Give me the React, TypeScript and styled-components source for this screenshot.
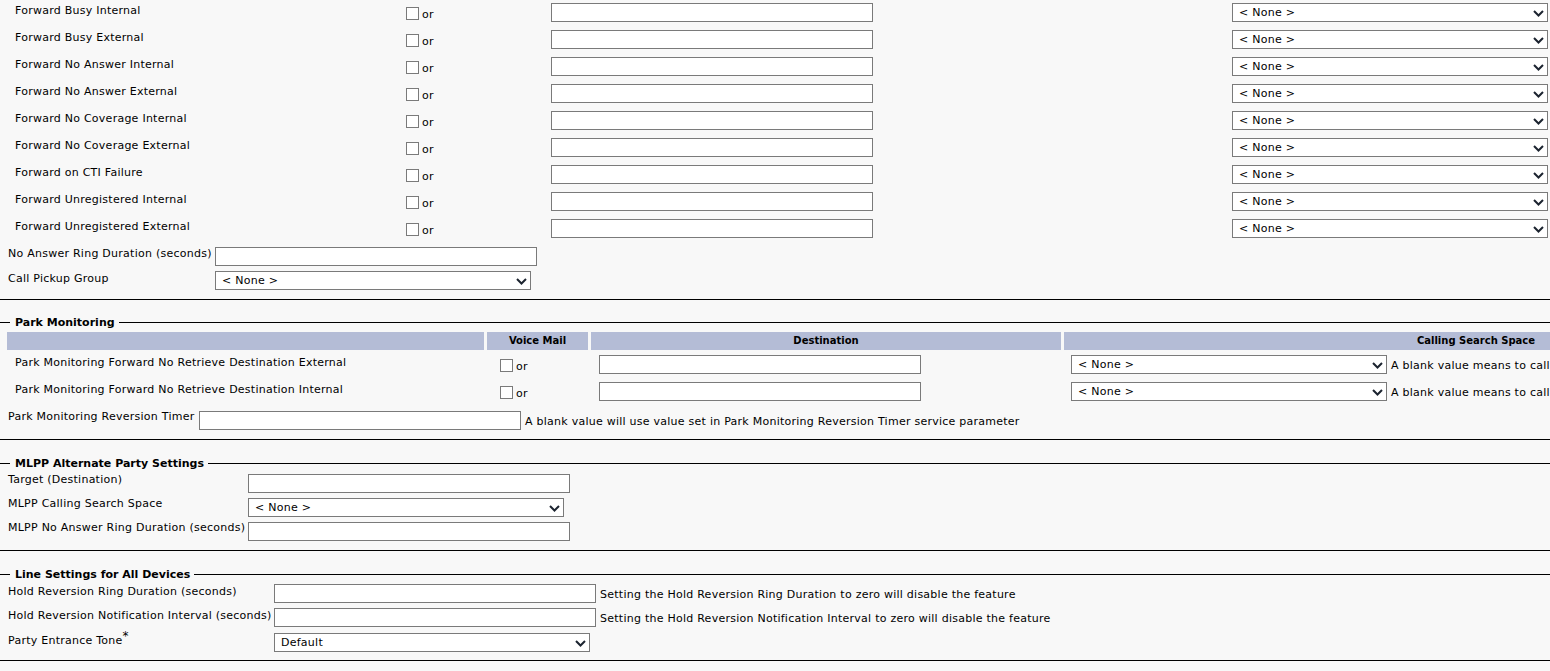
import styled, { createGlobalStyle } from "styled-components";

const FONT = `"DejaVu Sans", Verdana, "Liberation Sans", sans-serif`;

const GlobalStyle = createGlobalStyle`
    html, body {
        margin: 0;
        padding: 0;
        background: #f8f8f8;
        overflow: hidden;
    }
    body {
        font-family: ${FONT};
        font-size: 11px;
        line-height: 13px;
        letter-spacing: 0.25px;
        color: #000;
    }
`

const Page = styled.div`
    width: 1550px;
    overflow: hidden;
`

const Section = styled.section<{ $pt?: number; $pb: number }>`
    border-bottom: 1px solid #000;
    padding-top: ${(p) => p.$pt ?? 0}px;
    padding-bottom: ${(p) => p.$pb}px;
`

const SectionTitle = styled.div`
    display: flex;
    align-items: center;
    height: 13px;
    font-weight: bold;
    letter-spacing: 0;

    &::before {
        content: "";
        width: 10px;
        border-top: 1px solid #000;
    }
    &::after {
        content: "";
        flex: 1;
        border-top: 1px solid #000;
    }
    span {
        padding: 0 4px 0 5px;
        white-space: nowrap;
    }
`

const ForwardGrid = styled.div`
    display: grid;
    grid-template-columns: 391px 145px 681px 318px;
    grid-auto-rows: 27px;
    align-items: start;
    padding-left: 15px;
`

const FieldGrid = styled.div<{ $label: number; $row: number }>`
    display: grid;
    grid-template-columns: ${(p) => p.$label}px auto;
    grid-auto-rows: ${(p) => p.$row}px;
    align-items: start;
    padding-left: 8px;
`

const Label = styled.div<{ $pt: number; $pl?: number }>`
    padding-top: ${(p) => p.$pt}px;
    padding-left: ${(p) => p.$pl ?? 0}px;
    white-space: nowrap;

    sup {
        font-size: 12px;
        line-height: 0;
        vertical-align: 4px;
    }
`

const Control = styled.div<{ $mt: number; $pl?: number }>`
    display: flex;
    align-items: center;
    gap: 4px;
    margin-top: ${(p) => p.$mt}px;
    padding-left: ${(p) => p.$pl ?? 0}px;
    white-space: nowrap;
`

const CheckCell = styled.label<{ $pl?: number }>`
    display: flex;
    align-items: flex-end;
    padding-top: 7px;
    padding-left: ${(p) => p.$pl ?? 0}px;
`

const CheckBox = styled.input.attrs({ type: "checkbox" })`
    appearance: none;
    width: 13px;
    height: 13px;
    margin: 0;
    box-sizing: border-box;
    border: 1px solid #7a7a7a;
    background: #fff;
`

const OrText = styled.span`
    margin-left: 3px;
    margin-bottom: -1px;
`

const TextInput = styled.input.attrs({ type: "text" })<{ $w: number }>`
    width: ${(p) => p.$w}px;
    height: 19px;
    box-sizing: border-box;
    margin: 0;
    padding: 0 3px;
    border: 1px solid #7a7a7a;
    background: #fff;
    font: inherit;
    flex: none;
`

const SelectBox = styled.div<{ $w: number }>`
    width: ${(p) => p.$w}px;
    height: 19px;
    box-sizing: border-box;
    display: flex;
    align-items: center;
    justify-content: space-between;
    padding: 0 3px 0 6px;
    border: 1px solid #7a7a7a;
    background: #fff;
    flex: none;

    svg {
        display: block;
        margin-top: 1px;
    }
`

const Help = styled.span`
    padding-top: 2px;
`

const ParkGrid = styled.div`
    display: grid;
    grid-template-columns: 477px 101px 470px 824px;
    column-gap: 3px;
    padding-left: 7px;
    width: max-content;
`

const ParkHeader = styled(ParkGrid)`
    margin-top: 3px;
    height: 18px;
`

const HeaderCell = styled.div`
    background: #b4bcd6;
    font-size: 10px;
    font-weight: bold;
    letter-spacing: 0;
    text-align: center;
    line-height: 18px;
`

const ParkRows = styled(ParkGrid)`
    grid-auto-rows: 27px;
    align-items: start;
    margin-top: 2px;
`

const Chevron = () => (
    <svg width="11" height="7" viewBox="0 0 11 7">
        <polyline points="1,1 5.5,5.5 10,1" fill="none" stroke="#1c2430" strokeWidth="2" />
    </svg>
)

const Select = ({ w, value = "< None >" }: { w: number; value?: string }) => (
    <SelectBox $w={w}>
        <span>{value}</span>
        <Chevron />
    </SelectBox>
)

const forwardRows = [
    "Forward Busy Internal",
    "Forward Busy External",
    "Forward No Answer Internal",
    "Forward No Answer External",
    "Forward No Coverage Internal",
    "Forward No Coverage External",
    "Forward on CTI Failure",
    "Forward Unregistered Internal",
    "Forward Unregistered External",
]

const parkRows = [
    "Park Monitoring Forward No Retrieve Destination External",
    "Park Monitoring Forward No Retrieve Destination Internal",
]

export const App = () => {
    return (
        <Page>
            <GlobalStyle />

            <Section $pb={8}>
                <ForwardGrid>
                    {forwardRows.map((label) => (
                        <>
                            <Label key={label} $pt={4}>{label}</Label>
                            <CheckCell>
                                <CheckBox />
                                <OrText>or</OrText>
                            </CheckCell>
                            <Control $mt={3}>
                                <TextInput $w={322} />
                            </Control>
                            <Control $mt={3}>
                                <Select w={316} />
                            </Control>
                        </>
                    ))}
                </ForwardGrid>
                <FieldGrid $label={207} $row={24}>
                    <Label $pt={4}>No Answer Ring Duration (seconds)</Label>
                    <Control $mt={4}>
                        <TextInput $w={322} />
                    </Control>
                    <Label $pt={5}>Call Pickup Group</Label>
                    <Control $mt={4}>
                        <Select w={316} />
                    </Control>
                </FieldGrid>
            </Section>

            <Section $pt={16} $pb={9}>
                <SectionTitle><span>Park Monitoring</span></SectionTitle>
                <ParkHeader>
                    <HeaderCell />
                    <HeaderCell>Voice Mail</HeaderCell>
                    <HeaderCell>Destination</HeaderCell>
                    <HeaderCell>Calling Search Space</HeaderCell>
                </ParkHeader>
                <ParkRows>
                    {parkRows.map((label) => (
                        <>
                            <Label key={label} $pt={4} $pl={8}>{label}</Label>
                            <CheckCell $pl={13}>
                                <CheckBox />
                                <OrText>or</OrText>
                            </CheckCell>
                            <Control $mt={3} $pl={8}>
                                <TextInput $w={322} />
                            </Control>
                            <Control $mt={3} $pl={7}>
                                <Select w={316} />
                                <Help>A blank value means to call</Help>
                            </Control>
                        </>
                    ))}
                </ParkRows>
                <FieldGrid $label={191} $row={24}>
                    <Label $pt={4}>Park Monitoring Reversion Timer</Label>
                    <Control $mt={5}>
                        <TextInput $w={322} />
                        <Help>A blank value will use value set in Park Monitoring Reversion Timer service parameter</Help>
                    </Control>
                </FieldGrid>
            </Section>

            <Section $pt={17} $pb={8}>
                <SectionTitle><span>MLPP Alternate Party Settings</span></SectionTitle>
                <FieldGrid $label={240} $row={24}>
                    <Label $pt={3}>Target (Destination)</Label>
                    <Control $mt={4}>
                        <TextInput $w={322} />
                    </Control>
                    <Label $pt={3}>MLPP Calling Search Space</Label>
                    <Control $mt={4}>
                        <Select w={316} />
                    </Control>
                    <Label $pt={3}>MLPP No Answer Ring Duration (seconds)</Label>
                    <Control $mt={4}>
                        <TextInput $w={322} />
                    </Control>
                </FieldGrid>
            </Section>

            <Section $pt={17} $pb={7}>
                <SectionTitle><span>Line Settings for All Devices</span></SectionTitle>
                <FieldGrid $label={266} $row={24}>
                    <Label $pt={4}>Hold Reversion Ring Duration (seconds)</Label>
                    <Control $mt={3}>
                        <TextInput $w={322} />
                        <Help>Setting the Hold Reversion Ring Duration to zero will disable the feature</Help>
                    </Control>
                    <Label $pt={4}>Hold Reversion Notification Interval (seconds)</Label>
                    <Control $mt={3}>
                        <TextInput $w={322} />
                        <Help>Setting the Hold Reversion Notification Interval to zero will disable the feature</Help>
                    </Control>
                    <Label $pt={5}>Party Entrance Tone<sup>*</sup></Label>
                    <Control $mt={4}>
                        <Select w={316} value="Default" />
                    </Control>
                </FieldGrid>
            </Section>
        </Page>
    )
}

export default App;
